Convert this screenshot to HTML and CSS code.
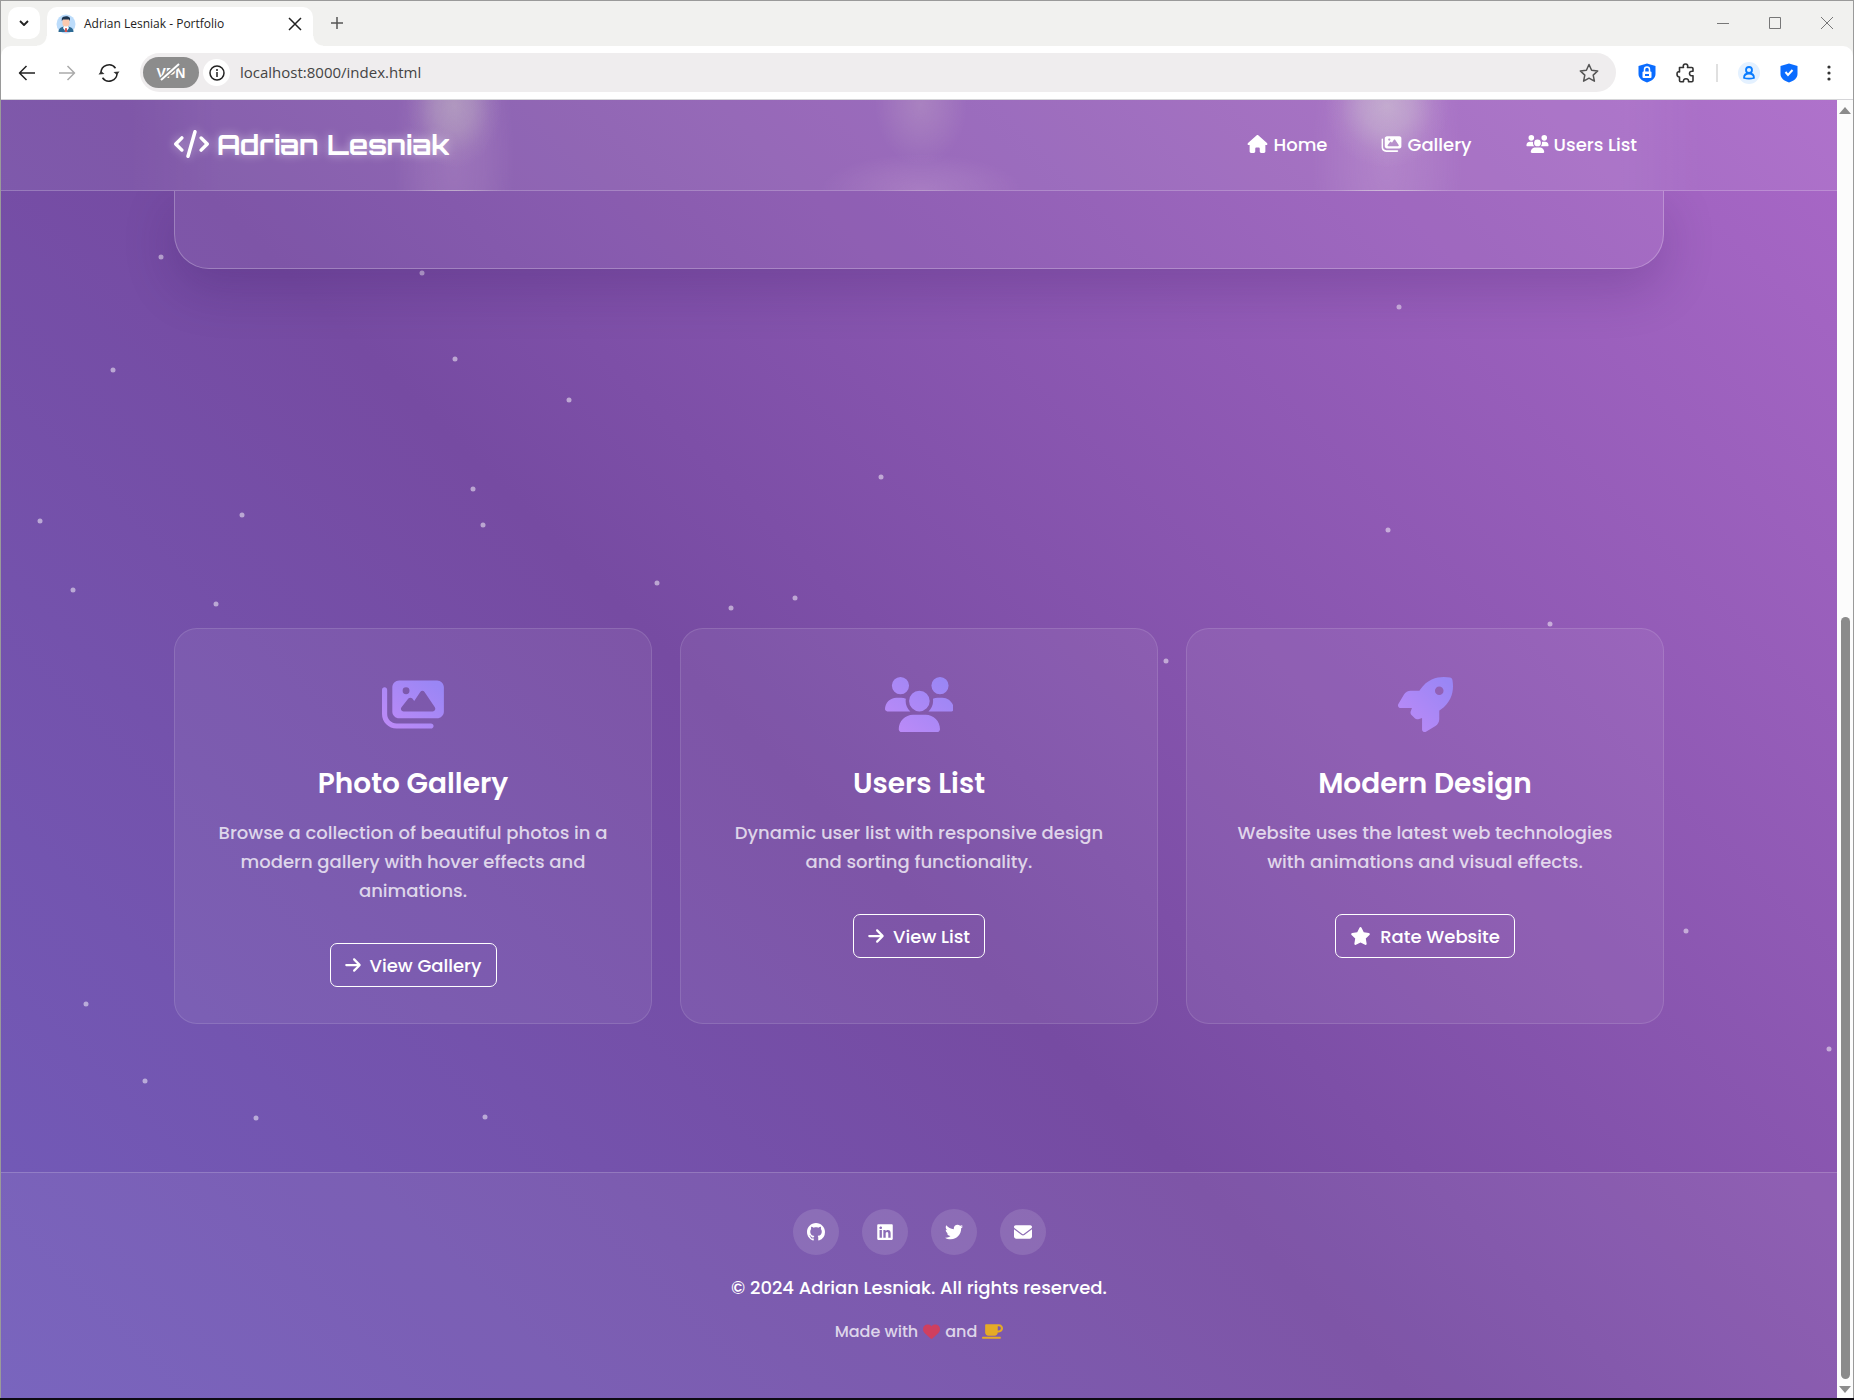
FILE: index.html
```html
<!DOCTYPE html>
<html lang="en">
<head>
<meta charset="utf-8">
<title>Adrian Lesniak - Portfolio</title>
<link rel="stylesheet" href="styles.css">
</head>
<body>
<svg class="defs" aria-hidden="true">
  <defs>
    <linearGradient id="accent" x1="0" y1="1" x2="1" y2="0"><stop offset="0.1" stop-color="#bb8af7"/><stop offset="0.9" stop-color="#9a86f5"/></linearGradient>
    <symbol id="i-images" viewBox="0 0 576 512"><path d="M160 32c-35.300 0-64 28.700-64 64V320c0 35.300 28.700 64 64 64H512c35.300 0 64-28.700 64-64V96c0-35.300-28.700-64-64-64H160zM396 138.700l96 144c4.900 7.400 5.400 16.800 1.200 24.600S480.900 320 472 320H328 280 200c-9.200 0-17.600-5.300-21.600-13.600s-2.900-18.200 2.900-25.400l64-80c4.600-5.700 11.400-9 18.700-9s14.200 3.300 18.700 9l17.300 21.600 56-84C360.500 132 368 128 376 128s15.500 4 20 10.700zM192 128a32 32 0 1 1 64 0 32 32 0 1 1 -64 0zM48 120c0-13.300-10.700-24-24-24S0 106.700 0 120V344c0 75.100 60.900 136 136 136H456c13.300 0 24-10.700 24-24s-10.700-24-24-24H136c-48.600 0-88-39.400-88-88V120z"/></symbol>
    <symbol id="i-users" viewBox="0 0 640 512"><path d="M144 0a80 80 0 1 1 0 160A80 80 0 1 1 144 0zM512 0a80 80 0 1 1 0 160A80 80 0 1 1 512 0zM0 298.700C0 239.800 47.800 192 106.700 192h42.700c15.900 0 31 3.500 44.600 9.700c-1.300 7.200-1.900 14.700-1.900 22.300c0 38.200 16.800 72.500 43.300 96c-.2 0-.4 0-.7 0H21.300C9.600 320 0 310.400 0 298.700zM405.300 320c-.2 0-.4 0-.7 0c26.600-23.500 43.300-57.800 43.300-96c0-7.600-.7-15-1.900-22.300c13.600-6.300 28.700-9.700 44.600-9.700h42.700C592.200 192 640 239.800 640 298.700c0 11.800-9.600 21.300-21.300 21.300H405.300zM224 224a96 96 0 1 1 192 0 96 96 0 1 1 -192 0zM128 485.300C128 411.700 187.700 352 261.300 352H378.700C452.300 352 512 411.700 512 485.300c0 14.700-11.900 26.700-26.700 26.700H154.700c-14.700 0-26.700-11.900-26.700-26.700z"/></symbol>
    <symbol id="i-rocket" viewBox="0 0 512 512"><path d="M156.600 384.900L125.700 354c-8.500-8.500-11.500-20.800-7.700-32.200c3-8.900 7-20.500 11.800-33.800L24 288c-8.600 0-16.600-4.600-20.900-12.100s-4.200-16.700 .2-24.100l52.500-88.500c13-21.900 36.500-35.300 61.900-35.300l82.300 0c2.400-4 4.800-7.700 7.200-11.300C289.100-4.100 411.100-8.100 483.900 5.300c11.600 2.100 20.600 11.200 22.800 22.800c13.400 72.900 9.300 194.800-111.400 276.700c-3.500 2.400-7.300 4.800-11.300 7.200v82.300c0 25.400-13.400 49-35.300 61.900l-88.500 52.500c-7.400 4.400-16.600 4.500-24.100 .2s-12.100-12.200-12.100-20.900V380.800c-14.100 4.900-26.400 8.900-35.700 11.900c-11.200 3.600-23.400 .5-31.800-7.800zM384 168a40 40 0 1 0 0-80 40 40 0 1 0 0 80z"/></symbol>
    <symbol id="i-code" viewBox="0 0 640 512"><path d="M392.800 1.200c-17-4.900-34.700 5-39.600 22l-128 448c-4.900 17 5 34.700 22 39.600s34.700-5 39.600-22l128-448c4.900-17-5-34.700-22-39.600zm80.600 120.100c-12.500 12.500-12.500 32.800 0 45.300L562.700 256l-89.400 89.400c-12.500 12.500-12.500 32.800 0 45.300s32.800 12.500 45.300 0l112-112c12.500-12.500 12.500-32.800 0-45.300l-112-112c-12.500-12.500-32.800-12.500-45.300 0zm-306.700 0c-12.500-12.500-32.800-12.500-45.300 0l-112 112c-12.500 12.500-12.500 32.800 0 45.300l112 112c12.500 12.500 32.800 12.500 45.300 0s12.500-32.800 0-45.300L77.300 256l89.400-89.400c12.500-12.500 12.500-32.800 0-45.300z"/></symbol>
    <symbol id="i-home" viewBox="0 0 576 512"><path d="M575.800 255.500c0 18-15 32.100-32 32.100h-32l.7 160.200c0 2.700-.2 5.400-.5 8.100V472c0 22.100-17.900 40-40 40H456c-1.100 0-2.200 0-3.300-.1c-1.400 .1-2.800 .1-4.200 .1H416 392c-22.100 0-40-17.900-40-40V448 384c0-17.700-14.300-32-32-32H256c-17.700 0-32 14.300-32 32v64 24c0 22.100-17.900 40-40 40H160 128.100c-1.500 0-3-.1-4.500-.2c-1.200 .1-2.400 .2-3.600 .2H104c-22.100 0-40-17.900-40-40V360c0-.9 0-1.900 .1-2.800V287.600H32c-18 0-32-14-32-32.100c0-9 3-17 10-24L266.400 8c7-7 15-8 22-8s15 2 21 7L564.800 231.500c8 7 12 15 11 24z"/></symbol>
    <symbol id="i-arrow" viewBox="0 0 448 512"><path d="M438.600 278.600c12.500-12.500 12.500-32.800 0-45.300l-160-160c-12.500-12.500-32.800-12.500-45.300 0s-12.500 32.800 0 45.300L338.800 224 32 224c-17.700 0-32 14.300-32 32s14.300 32 32 32l306.700 0L233.400 393.400c-12.500 12.500-12.500 32.800 0 45.300s32.800 12.500 45.300 0l160-160z"/></symbol>
    <symbol id="i-star" viewBox="0 0 576 512"><path d="M316.900 18C311.600 7 300.400 0 288.100 0s-23.400 7-28.800 18L195 150.300 51.400 171.500c-12 1.800-22 10.200-25.700 21.700s-.7 24.200 7.900 32.700L137.800 329 113.200 474.700c-2 12 3 24.200 12.900 31.300s23 8 33.800 2.300l128.300-68.500 128.300 68.500c10.800 5.700 23.900 4.900 33.800-2.300s14.900-19.300 12.900-31.300L438.500 329 542.700 225.900c8.600-8.500 11.700-21.200 7.900-32.700s-13.700-19.900-25.700-21.700L381.200 150.300 316.900 18z"/></symbol>
    <symbol id="i-github" viewBox="0 0 16 16"><path d="M8 0C3.580 0 0 3.580 0 8c0 3.540 2.290 6.530 5.470 7.590.4.07.55-.17.55-.38 0-.19-.01-.82-.01-1.490-2.010.37-2.530-.49-2.690-.94-.09-.23-.48-.94-.82-1.130-.28-.15-.68-.52-.01-.53.63-.01 1.080.58 1.230.82.72 1.210 1.870.87 2.330.66.07-.52.28-.87.51-1.070-1.780-.2-3.640-.89-3.640-3.950 0-.87.31-1.590.82-2.150-.08-.2-.36-1.020.08-2.120 0 0 .67-.21 2.200.82.64-.18 1.320-.27 2-.27s1.360.09 2 .27c1.530-1.040 2.200-.82 2.200-.82.44 1.100.16 1.920.08 2.120.51.56.82 1.270.82 2.150 0 3.070-1.870 3.750-3.650 3.950.29.25.54.73.54 1.480 0 1.070-.01 1.930-.01 2.200 0 .21.15.46.55.38A8.010 8.010 0 0 0 16 8c0-4.420-3.580-8-8-8z"/></symbol>
    <symbol id="i-linkedin" viewBox="0 0 448 512"><path d="M416 32H31.900C14.300 32 0 46.500 0 64.300v383.400C0 465.500 14.300 480 31.900 480H416c17.600 0 32-14.500 32-32.300V64.300c0-17.800-14.400-32.300-32-32.300zM135.400 416H69V202.200h66.500V416zm-33.200-243c-21.300 0-38.500-17.300-38.500-38.500S80.900 96 102.200 96c21.200 0 38.500 17.300 38.500 38.500 0 21.300-17.200 38.500-38.500 38.500zm282.100 243h-66.400V312c0-24.800-.5-56.700-34.500-56.700-34.600 0-39.900 27-39.900 54.900V416h-66.400V202.200h63.700v29.200h.9c8.900-16.800 30.600-34.500 62.900-34.500 67.200 0 79.700 44.300 79.700 101.900V416z"/></symbol>
    <symbol id="i-twitter" viewBox="0 0 512 512"><path d="M459.370 151.716c.325 4.548.325 9.097.325 13.645 0 138.720-105.583 298.558-298.558 298.558-59.452 0-114.680-17.219-161.137-47.106 8.447.974 16.568 1.299 25.340 1.299 49.055 0 94.213-16.568 130.274-44.832-46.132-.975-84.792-31.188-98.112-72.772 6.498.974 12.995 1.624 19.818 1.624 9.421 0 18.843-1.300 27.614-3.573-48.081-9.747-84.143-51.980-84.143-102.985v-1.299c13.969 7.797 30.214 12.670 47.431 13.319-28.264-18.843-46.781-51.005-46.781-87.391 0-19.492 5.197-37.360 14.294-52.954 51.655 63.675 129.300 105.258 216.365 109.807-1.624-7.797-2.599-15.918-2.599-24.040 0-57.828 46.782-104.934 104.934-104.934 30.213 0 57.502 12.670 76.670 33.137 23.715-4.548 46.456-13.320 66.599-25.340-7.798 24.366-24.366 44.833-46.132 57.827 21.117-2.273 41.584-8.122 60.426-16.243-14.292 20.791-32.161 39.308-52.628 54.253z"/></symbol>
    <symbol id="i-mail" viewBox="0 0 512 512"><path d="M48 64C21.500 64 0 85.500 0 112c0 15.100 7.100 29.300 19.200 38.400L236.800 313.600c11.400 8.500 27 8.500 38.400 0L492.800 150.400c12.100-9.100 19.200-23.300 19.200-38.400c0-26.500-21.500-48-48-48H48zM0 176V384c0 35.300 28.700 64 64 64H448c35.300 0 64-28.700 64-64V176L294.400 339.200c-22.800 17.100-54 17.100-76.800 0L0 176z"/></symbol>
    <symbol id="i-heart" viewBox="0 0 512 512"><path d="M47.600 300.400L228.300 469.100c7.500 7 17.400 10.900 27.700 10.900s20.200-3.900 27.700-10.900L464.400 300.400c30.400-28.300 47.600-68 47.600-109.500v-5.800c0-69.900-50.500-129.500-119.400-141C347 36.500 300.600 51.400 268 84L256 96 244 84c-32.600-32.600-79-47.500-124.600-39.900C50.500 55.600 0 115.200 0 185.100v5.800c0 41.500 17.200 81.200 47.600 109.500z"/></symbol>
    <symbol id="i-mug" viewBox="0 0 640 512"><path d="M96 64c0-17.700 14.300-32 32-32H448h64c70.700 0 128 57.300 128 128s-57.300 128-128 128H480c0 53-43 96-96 96H192c-53 0-96-43-96-96V64zM480 224h32c35.300 0 64-28.700 64-64s-28.700-64-64-64H480V224zM32 416H544c17.700 0 32 14.300 32 32s-14.300 32-32 32H32c-17.700 0-32-14.300-32-32s14.300-32 32-32z"/></symbol>
  </defs>
</svg>

<div class="window">
  <div class="tabstrip">
    <button class="tab-search" aria-label="Search tabs"><svg width="12" height="12" viewBox="0 0 12 12"><path d="M2 4l4 4 4-4" class="stroke bold"/></svg></button>
    <div class="tab">
      <svg class="favicon" width="20" height="20" viewBox="0 0 20 20"><circle cx="10" cy="10" r="9.500" fill="#bcdcfb"/><path d="M2.500 18c0-4 3-5.500 7.500-5.500s7.500 1.500 7.500 5.500z" fill="#2d6a94"/><path d="M8 12h4l1 2-3 4-3-4z" fill="#fff"/><path d="M9.300 14h1.400l.6 4H8.700z" fill="#d9534f"/><rect x="6.500" y="4" width="7" height="8.500" rx="3.200" fill="#fbc9ae"/><path d="M5.800 7V4.500C6.500 2 12.500 1.500 14 4v3l-1-1.500H7z" fill="#1d3550"/></svg>
      <span class="tab-title">Adrian Lesniak - Portfolio</span>
      <button class="tab-close" aria-label="Close tab"><svg width="14" height="14" viewBox="0 0 14 14"><path d="M1 1l12 12M13 1L1 13" class="stroke"/></svg></button>
    </div>
    <button class="tab-new" aria-label="New tab"><svg width="14" height="14" viewBox="0 0 14 14"><path d="M7 1v12M1 7h12" class="stroke grey"/></svg></button>
    <div class="window-controls">
      <button aria-label="Minimize"><svg width="14" height="14" viewBox="0 0 14 14"><path d="M1 7.500h12" class="stroke thin"/></svg></button>
      <button aria-label="Maximize"><svg width="14" height="14" viewBox="0 0 14 14"><path d="M1.500 1.500h11v11h-11z" class="stroke thin"/></svg></button>
      <button aria-label="Close"><svg width="14" height="14" viewBox="0 0 14 14"><path d="M1 1l12 12M13 1L1 13" class="stroke thin"/></svg></button>
    </div>
  </div>

  <div class="toolbar">
    <div class="nav-buttons">
      <button aria-label="Back"><svg width="18" height="18" viewBox="0 0 18 18"><path d="M17 9H1.500M8.500 2l-7 7 7 7" class="stroke"/></svg></button>
      <button aria-label="Forward"><svg width="18" height="18" viewBox="0 0 18 18"><path d="M1 9h15.500M9.500 2l7 7-7 7" class="stroke light"/></svg></button>
      <button aria-label="Reload"><svg width="22" height="20" viewBox="0 0 22 20"><path d="M3 10a8 8 0 0 1 14.500-4.800M19 10A8 8 0 0 1 4.500 14.800" class="stroke"/><path d="M.5 11.500L3 8l3.500 3zM21.500 8.500L19 12l-3.500-3z" fill="#333"/></svg></button>
    </div>
    <div class="address">
      <button class="vpn" aria-label="VPN is off"><span>VPN</span><svg width="32" height="20" viewBox="0 0 32 20"><path d="M6 18L24 2" stroke="#8c8c8c" stroke-width="5"/><path d="M6 18L24 2" stroke="#fff" stroke-width="2"/></svg></button>
      <button class="info" aria-label="Site information"><svg width="16" height="16" viewBox="0 0 16 16"><circle cx="8" cy="8" r="7" class="stroke"/><path d="M8 7v5M8 4v2" class="stroke"/></svg></button>
      <input class="url" type="text" aria-label="Address" value="localhost:8000/index.html">
      <button class="bookmark" aria-label="Bookmark"><svg width="20" height="20" viewBox="0 0 20 20"><path d="M10 1.500l2.600 5.700 6.100.7-4.500 4.200 1.200 6.100-5.400-3-5.400 3 1.200-6.100L1.300 7.900l6.100-.7z" class="stroke grey"/></svg></button>
    </div>
    <div class="extensions">
      <button aria-label="Password manager"><svg width="18" height="20" viewBox="0 0 18 20"><path d="M9 .5l8.500 2.500v8c0 4-3.500 7-8.500 8.500C4 18 .5 15 .5 11V3z" fill="#0a6cff"/><rect x="4.500" y="8.500" width="9" height="6.500" rx="1" fill="#fff"/><path d="M6.500 9V6.500a2.500 2.500 0 0 1 5 0V9" fill="none" stroke="#fff" stroke-width="1.500"/><path d="M7 12h4" stroke="#0a6cff" stroke-width="2"/></svg></button>
      <button aria-label="Extensions"><svg width="20" height="20" viewBox="0 0 20 20"><path d="M3.500 4.500h4c-.8-2 .2-3.500 2-3.500s2.800 1.500 2 3.500h4.300c.7 0 1.200.5 1.200 1.200v2.600c-2.300-.4-3.500.7-3.500 2.200s1.200 2.600 3.500 2.200v4.800c0 .7-.5 1.200-1.200 1.200h-3.300c.3-2-.7-3-2.500-3s-2.800 1-2.500 3H4.700c-.7 0-1.200-.5-1.200-1.200v-3.500C1.500 14 1 12.500 1 11s1-2.700 2.500-2z" class="stroke dark"/></svg></button>
      <span class="divider"></span>
      <button aria-label="Profile"><svg width="22" height="22" viewBox="0 0 22 22"><circle cx="11" cy="11" r="11" fill="#e4f1ff"/><circle cx="11" cy="8" r="3" fill="none" stroke="#0a7cff" stroke-width="1.800"/><path d="M6 16c0-3 2-4.500 5-4.500s5 1.500 5 4.500c-3 .8-7 .8-10 0z" fill="none" stroke="#0a7cff" stroke-width="1.800" stroke-linejoin="round"/></svg></button>
      <button aria-label="Protection"><svg width="18" height="20" viewBox="0 0 18 20"><path d="M9 .5l8.500 2.500v8c0 4-3.500 7-8.500 8.500C4 18 .5 15 .5 11V3z" fill="#0a6cff"/><path d="M5.500 9l2.500 3 4.500-5" fill="none" stroke="#fff" stroke-width="2"/></svg></button>
      <button class="menu" aria-label="Menu"><svg width="4" height="16" viewBox="0 0 4 16" fill="#333"><circle cx="2" cy="2" r="1.600"/><circle cx="2" cy="8" r="1.600"/><circle cx="2" cy="14" r="1.600"/></svg></button>
    </div>
  </div>

  <div class="viewport">
    <div class="page">
      <svg class="particles" aria-hidden="true">
        <circle cx="160" cy="157" r="2.500"/><circle cx="421" cy="173" r="2.500"/><circle cx="112" cy="270" r="2.500"/><circle cx="454" cy="259" r="2.500"/><circle cx="568" cy="300" r="2.500"/><circle cx="880" cy="377" r="2.500"/><circle cx="1398" cy="207" r="2.500"/><circle cx="472" cy="389" r="2.500"/><circle cx="482" cy="425" r="2.500"/><circle cx="241" cy="415" r="2.500"/><circle cx="39" cy="421" r="2.500"/><circle cx="72" cy="490" r="2.500"/><circle cx="215" cy="504" r="2.500"/><circle cx="656" cy="483" r="2.500"/><circle cx="730" cy="508" r="2.500"/><circle cx="794" cy="498" r="2.500"/><circle cx="1387" cy="430" r="2.500"/><circle cx="1165" cy="561" r="2.500"/><circle cx="1549" cy="524" r="2.500"/><circle cx="85" cy="904" r="2.500"/><circle cx="144" cy="981" r="2.500"/><circle cx="255" cy="1018" r="2.500"/><circle cx="484" cy="1017" r="2.500"/><circle cx="1685" cy="831" r="2.500"/><circle cx="1828" cy="949" r="2.500"/>
      </svg>
      <header class="site-header">
        <div class="container header-inner">
          <a class="brand" href="#"><svg class="icon" viewBox="0 0 640 512"><use href="#i-code"/></svg>Adrian Lesniak</a>
          <nav class="site-nav">
            <a href="#home"><svg class="icon" viewBox="0 0 576 512"><use href="#i-home"/></svg>Home</a>
            <a href="#gallery"><svg class="icon" viewBox="0 0 576 512"><use href="#i-images"/></svg>Gallery</a>
            <a href="#users"><svg class="icon icon-wide" viewBox="0 0 640 512"><use href="#i-users"/></svg>Users List</a>
          </nav>
        </div>
      </header>
      <main class="container">
        <section class="hero" aria-label="Introduction"></section>
        <section class="cards">
          <article class="card">
            <svg class="card-icon" viewBox="0 0 576 512"><use href="#i-images"/></svg>
            <h2>Photo Gallery</h2>
            <p>Browse a collection of beautiful photos in a modern gallery with hover effects and animations.</p>
            <a class="btn" href="#gallery"><svg class="icon icon-narrow" viewBox="0 0 448 512"><use href="#i-arrow"/></svg>View Gallery</a>
          </article>
          <article class="card">
            <svg class="card-icon" viewBox="0 0 640 512"><use href="#i-users"/></svg>
            <h2>Users List</h2>
            <p>Dynamic user list with responsive design and sorting functionality.</p>
            <a class="btn" href="#users"><svg class="icon icon-narrow" viewBox="0 0 448 512"><use href="#i-arrow"/></svg>View List</a>
          </article>
          <article class="card">
            <svg class="card-icon" viewBox="0 0 512 512"><use href="#i-rocket"/></svg>
            <h2>Modern Design</h2>
            <p>Website uses the latest web technologies with animations and visual effects.</p>
            <button class="btn"><svg class="icon" viewBox="0 0 576 512"><use href="#i-star"/></svg>Rate Website</button>
          </article>
        </section>
      </main>
      <footer class="site-footer">
        <div class="social">
          <a href="#github" aria-label="GitHub"><svg viewBox="0 0 16 16"><use href="#i-github"/></svg></a>
          <a href="#linkedin" aria-label="LinkedIn"><svg viewBox="0 0 448 512"><use href="#i-linkedin"/></svg></a>
          <a href="#twitter" aria-label="Twitter"><svg viewBox="0 0 512 512"><use href="#i-twitter"/></svg></a>
          <a href="#mail" aria-label="Email"><svg viewBox="0 0 512 512"><use href="#i-mail"/></svg></a>
        </div>
        <p class="copyright">© 2024 Adrian Lesniak. All rights reserved.</p>
        <p class="made">Made with <svg class="heart" viewBox="0 0 512 512"><use href="#i-heart"/></svg> and <svg class="mug" viewBox="0 0 640 512"><use href="#i-mug"/></svg></p>
      </footer>
    </div>
    <div class="scrollbar" aria-hidden="true">
      <svg width="12" height="7" viewBox="0 0 12 7"><path d="M6 0l6 7H0z"/></svg>
      <span class="thumb"></span>
      <svg width="12" height="7" viewBox="0 0 12 7"><path d="M0 0h12L6 7z"/></svg>
    </div>
  </div>
</div>
</body>
</html>
```
FILE: styles.css
```css
* { box-sizing: border-box; }

body {
  margin: 0;
  background: #0e0b12;
  font-family: Poppins, Inter, "Open Sans", sans-serif;
}

button {
  padding: 0;
  border: 0;
  background: none;
  font: inherit;
  color: inherit;
}

a { color: inherit; text-decoration: none; }
svg { display: block; flex: none; }
.defs { position: absolute; width: 0; height: 0; }

/* Browser window */
.window {
  display: flex;
  flex-direction: column;
  min-height: calc(100vh - 2px);
  margin-bottom: 2px;
  border: 1px solid #9a9a9a;
  border-bottom: 0;
  background: #f1f1ef;
}

.stroke { fill: none; stroke: #222; stroke-width: 1.5; stroke-linejoin: round; }
.bold { stroke-width: 1.8; }
.thin { stroke: #777; stroke-width: 1; }
.dark { stroke: #333; stroke-width: 1.6; }
.grey { stroke: #555; }
.light { stroke: #aaa; }

.tabstrip { display: flex; align-items: flex-end; height: 45px; padding-left: 7px; }

.tab-search {
  display: grid;
  place-items: center;
  width: 32px;
  height: 32px;
  margin: 0 7px 7px 0;
  border-radius: 10px;
  background: #fff;
}

.tab {
  position: relative;
  display: flex;
  align-items: center;
  width: 266px;
  height: 39px;
  padding: 0 11px 6px 9px;
  border-radius: 10px 10px 0 0;
  background: #fff;
}

.tab::before,
.tab::after {
  content: "";
  position: absolute;
  bottom: 0;
  width: 10px;
  height: 10px;
}
.tab::before { left: -10px; background: radial-gradient(circle at 0 0, transparent 9px, #fff 10px); }
.tab::after { right: -10px; background: radial-gradient(circle at 100% 0, transparent 9px, #fff 10px); }

.tab-title {
  flex: 1;
  margin-left: 8px;
  font: 12px "Segoe UI", "Open Sans", sans-serif;
  color: #222;
}

.tab-new { margin: 0 0 16px 17px; }

.window-controls { display: flex; gap: 38px; margin: 0 19px 16px auto; }

.toolbar {
  display: flex;
  align-items: center;
  height: 54px;
  padding: 0 22px 0 17px;
  border-bottom: 1px solid #d5d5d8;
  border-radius: 10px 10px 0 0;
  background: #fff;
}

.nav-buttons { display: flex; gap: 22px; margin-right: 20px; }
.nav-buttons button { display: grid; place-items: center; height: 22px; }

.address {
  flex: 1;
  display: flex;
  align-items: center;
  height: 39px;
  padding: 0 17px 0 3px;
  border-radius: 20px;
  background: #efedee;
}

.vpn {
  position: relative;
  width: 56px;
  height: 31px;
  margin-right: 4px;
  border-radius: 16px;
  background: #8c8c8c;
  color: #fff;
  font: bold 14px "Liberation Sans", sans-serif;
}
.vpn svg { position: absolute; left: 12px; top: 5px; }

.info {
  display: grid;
  place-items: center;
  width: 27px;
  height: 27px;
  margin-right: 10px;
  border-radius: 50%;
  background: #fff;
}

.url {
  flex: 1;
  min-width: 0;
  padding: 0 0 1px;
  border: 0;
  outline: 0;
  background: none;
  font: 15px "Segoe UI", "Open Sans", sans-serif;
  color: #444;
}

.extensions { display: flex; align-items: center; gap: 20px; margin-left: 22px; }
.extensions .divider { width: 2px; height: 18px; background: #e0e0e0; }
.extensions .menu { margin-left: 9px; }

.viewport { flex: 1; display: flex; background: #fcfcfc; }

/* Portfolio page */
.page {
  position: relative;
  flex: 1;
  display: flex;
  flex-direction: column;
  overflow: hidden;
  background: linear-gradient(45deg, #715cba 0%, #764ba2 45%, #a968c7 100%);
  color: #fff;
}

.particles {
  position: absolute;
  inset: 0;
  width: 100%;
  height: 100%;
  fill: rgba(255, 255, 255, 0.5);
}

.container { width: 100%; max-width: 1490px; margin: 0 auto; }

.site-header {
  position: relative;
  height: 91px;
  border-bottom: 1px solid rgba(255, 255, 255, 0.2);
  background:
    radial-gradient(ellipse 48px 62px at 453px 6px, rgba(210, 210, 200, 0.4), rgba(210, 210, 200, 0.28) 40%, rgba(210, 210, 200, 0.08) 75%, transparent),
    radial-gradient(ellipse 60px 180px at 453px 60px, rgba(230, 200, 225, 0.16), rgba(230, 200, 225, 0.1) 50%, transparent),
    radial-gradient(ellipse 46px 60px at 920px 5px, rgba(215, 200, 205, 0.24), rgba(215, 200, 205, 0.14) 45%, transparent),
    radial-gradient(ellipse 100px 36px at 920px 90px, rgba(225, 195, 225, 0.2), rgba(225, 195, 225, 0.1) 55%, transparent),
    radial-gradient(ellipse 62px 62px at 1386px 6px, rgba(220, 225, 215, 0.44), rgba(220, 225, 215, 0.3) 40%, rgba(220, 225, 215, 0.08) 75%, transparent),
    radial-gradient(ellipse 75px 180px at 1386px 60px, rgba(230, 210, 230, 0.18), rgba(230, 210, 230, 0.1) 50%, transparent),
    linear-gradient(90deg, transparent 130px, rgba(255, 255, 255, 0.05) 220px, rgba(255, 255, 255, 0.05) 1620px, transparent 1700px),
    rgba(255, 255, 255, 0.07);
}

.header-inner { display: flex; align-items: center; justify-content: space-between; height: 88px; }

.icon { width: 21px; height: 18px; fill: currentColor; }
.icon-wide { width: 23px; }
.icon-narrow { width: 16px; }

.brand {
  display: flex;
  align-items: center;
  gap: 8px;
  font: bold 28px Orbitron, "DejaVu Sans", sans-serif;
  text-shadow: 0 0 10px rgba(255, 255, 255, 0.5);
}
.brand .icon { width: 35px; height: 28px; filter: drop-shadow(0 0 5px rgba(255, 255, 255, 0.5)); }

.site-nav { display: flex; font-size: 18px; font-weight: 500; }
.site-nav a { display: flex; align-items: center; gap: 5px; padding: 0 27px; }

.hero {
  position: relative;
  height: 78px;
  margin-bottom: 359px;
  border: 1px solid rgba(255, 255, 255, 0.25);
  border-top: 0;
  border-radius: 0 0 35px 35px;
  background: rgba(255, 255, 255, 0.06);
  box-shadow: 0 20px 50px rgba(50, 20, 90, 0.22);
  clip-path: inset(0 -80px -90px -80px);
}

.cards {
  display: grid;
  grid-template-columns: repeat(3, 1fr);
  gap: 28px;
  margin-bottom: 148px;
}

.card {
  display: flex;
  flex-direction: column;
  align-items: center;
  padding: 48px 36px 36px;
  border: 1px solid rgba(255, 255, 255, 0.12);
  border-radius: 23px;
  background: rgba(255, 255, 255, 0.06);
  text-align: center;
}

.card-icon { height: 55px; fill: url(#accent); }

.card h2 { margin: 33px 0 15px; font-size: 28px; font-weight: 600; line-height: 38px; }

.card p { margin: 0 0 38px; font-size: 18px; font-weight: 500; line-height: 29px; color: rgba(255, 255, 255, 0.75); }

.btn {
  display: flex;
  align-items: center;
  gap: 9px;
  height: 44px;
  padding: 0 14px;
  border: 1px solid #fff;
  border-radius: 7px;
  font-size: 18px;
  font-weight: 500;
}

.site-footer {
  position: relative;
  flex: 1;
  display: flex;
  flex-direction: column;
  align-items: center;
  padding: 36px 0 44px;
  border-top: 1px solid rgba(255, 255, 255, 0.18);
  background: rgba(255, 255, 255, 0.06);
}

.social { display: flex; gap: 23px; margin-bottom: 18px; }
.social a {
  display: grid;
  place-items: center;
  width: 46px;
  height: 46px;
  border-radius: 50%;
  background: rgba(255, 255, 255, 0.12);
}
.social svg { width: 18px; height: 18px; fill: #fff; }

.site-footer p { margin: 0; line-height: 29px; }
.copyright { font-size: 18px; font-weight: 500; }
.site-footer .made {
  display: flex;
  align-items: center;
  gap: 5px;
  margin-top: 15px;
  font-size: 16px;
  font-weight: 500;
  color: rgba(255, 255, 255, 0.75);
}
.heart { width: 17px; height: 17px; fill: #cf3f5f; }
.mug { width: 21px; height: 17px; fill: #e5ab25; }

.scrollbar {
  display: flex;
  flex-direction: column;
  align-items: center;
  justify-content: space-between;
  width: 16px;
  padding: 7px 0 5px;
  fill: #8b8b8b;
}
.scrollbar .thumb {
  flex: 1;
  width: 9px;
  margin: 503px 0 7px;
  border-radius: 5px;
  background: #8b8b8b;
}
```
